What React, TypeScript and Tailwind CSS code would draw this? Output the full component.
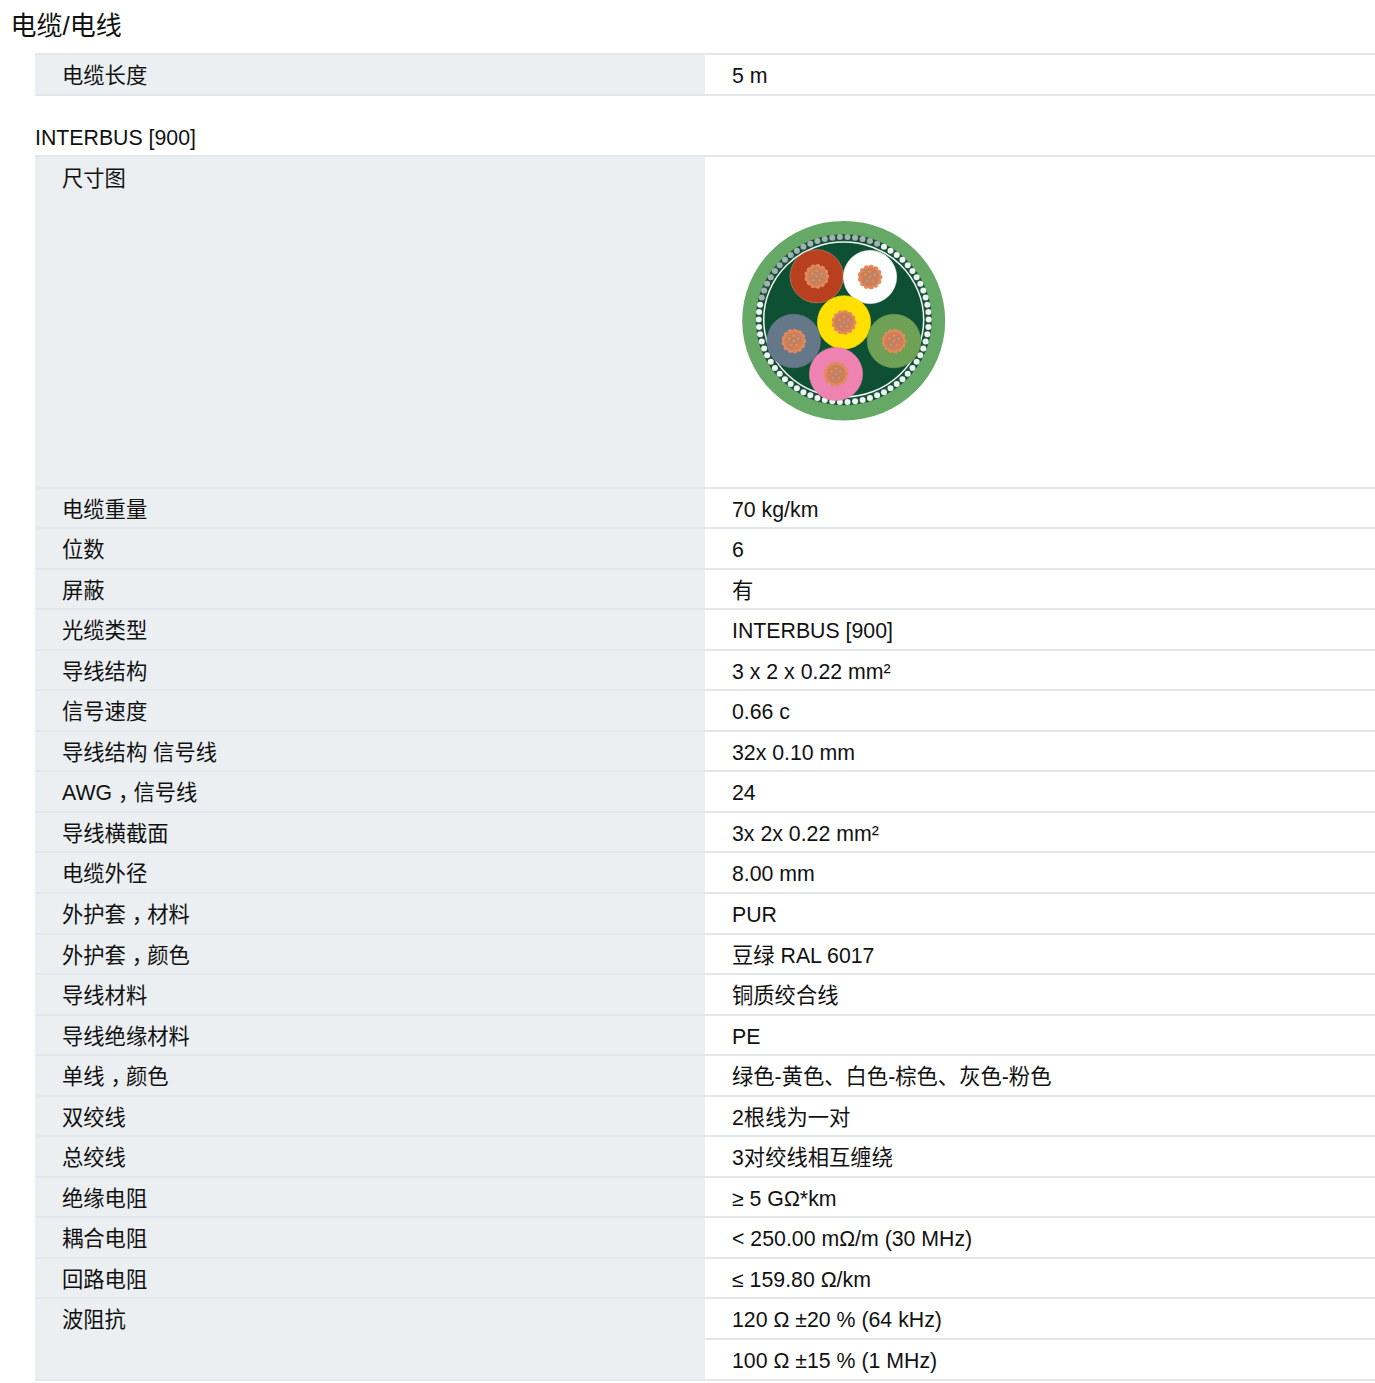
import React from 'react';

const rows: [string, string[]][] = [
  ['电缆重量', ['70 kg/km']],
  ['位数', ['6']],
  ['屏蔽', ['有']],
  ['光缆类型', ['INTERBUS [900]']],
  ['导线结构', ['3 x 2 x 0.22 mm²']],
  ['信号速度', ['0.66 c']],
  ['导线结构 信号线', ['32x 0.10 mm']],
  ['AWG，信号线', ['24']],
  ['导线横截面', ['3x 2x 0.22 mm²']],
  ['电缆外径', ['8.00 mm']],
  ['外护套，材料', ['PUR']],
  ['外护套，颜色', ['豆绿 RAL 6017']],
  ['导线材料', ['铜质绞合线']],
  ['导线绝缘材料', ['PE']],
  ['单线，颜色', ['绿色-黄色、白色-棕色、灰色-粉色']],
  ['双绞线', ['2根线为一对']],
  ['总绞线', ['3对绞线相互缠绕']],
  ['绝缘电阻', ['≥ 5 GΩ*km']],
  ['耦合电阻', ['< 250.00 mΩ/m (30 MHz)']],
  ['回路电阻', ['≤ 159.80 Ω/km']],
  ['波阻抗', ['120 Ω ±20 % (64 kHz)', '100 Ω ±15 % (1 MHz)']],
];

const cores = [
  { x: 91.7, y: 71.3, r: 26.6, fill: '#b8401f', stroke: '#c98a6c' },
  { x: 145, y: 72, r: 26.6, fill: '#ffffff', stroke: '#ffffff' },
  { x: 119, y: 117.3, r: 26.6, fill: '#ffe000', stroke: '#ffe000' },
  { x: 68.7, y: 136, r: 26.8, fill: '#64788a', stroke: '#64788a' },
  { x: 169, y: 136, r: 26.8, fill: '#6ea055', stroke: '#6ea055' },
  { x: 111, y: 169, r: 26.6, fill: '#ee82b0', stroke: '#ee82b0' },
];

function CableSection() {
  const beads = Array.from({ length: 70 }, (_, i) => {
    const a = (i / 70) * Math.PI * 2;
    return {
      x: 118.7 + 85 * Math.cos(a),
      y: 114.5 + 82.5 * Math.sin(a),
      up: Math.sin(a) < -0.2 && Math.cos(a) < 0.45,
    };
  });
  const outer = Array.from({ length: 13 }, (_, i) => {
    const a = (i / 13) * Math.PI * 2;
    return [9.8 * Math.cos(a), 9.8 * Math.sin(a)];
  });
  const inner = [[0, 0], [-4.6, -2.5], [4.6, -2.5], [0, -5.4], [-3, 4], [3, 4]];
  return (
    <svg width="240" height="235" viewBox="0 0 240 235" className="blur-[0.35px]">
      <ellipse cx="118.7" cy="115.7" rx="101.5" ry="99.8" fill="#66a866" />
      <ellipse cx="118.7" cy="114.7" rx="88" ry="85.5" fill="#16503a" />
      {beads.map((b, i) => (
        <circle key={i} cx={b.x} cy={b.y} r="3" fill={b.up ? '#a3b2ae' : '#eef3ef'} />
      ))}
      <ellipse cx="118.7" cy="114.5" rx="80" ry="77.5" fill="#0e5034" stroke="#f2f5f2" strokeWidth="1.5" />
      {cores.map((c, i) => (
        <g key={i}>
          <circle cx={c.x} cy={c.y} r={c.r} fill={c.fill} stroke={c.stroke} strokeWidth="0.6" />
          {outer.map(([dx, dy], j) => (
            <circle key={j} cx={c.x + dx} cy={c.y + dy} r="2.6" fill="#e08a5e" />
          ))}
          <circle cx={c.x} cy={c.y} r="9.5" fill="#cf8058" />
          {inner.map(([dx, dy], j) => (
            <circle key={j} cx={c.x + dx} cy={c.y + dy} r="2.1" fill={j % 2 === 0 ? '#bd9484' : '#dd8c62'} stroke="#b06c46" strokeWidth="0.4" />
          ))}
        </g>
      ))}
    </svg>
  );
}

// the source page sets the full-width comma in the middle of its cell
function Label({ text }: { text: string }) {
  const parts = text.split('，');
  if (parts.length === 1) return <>{text}</>;
  return (
    <>
      {parts[0]}
      <span className="inline-block w-[1em] pl-[0.28em] tracking-[-0.28em]">，</span>
      {parts[1]}
    </>
  );
}

function Row({ label, values }: { label: string; values: string[] }) {
  return (
    <div className="flex border-b-2 border-[#e3e6ea]">
      <div className="w-[669.5px] shrink-0 bg-[#eceff2] pl-[27px] pt-[7px] leading-[28px]">
        <Label text={label} />
      </div>
      <div className="flex-1">
        {values.map((v, i) => (
          <div
            key={v}
            className={
              i < values.length - 1
                ? 'h-[40.55px] border-b-2 border-[#e3e6ea] pl-[27.5px] pt-[7px] leading-[28px]'
                : 'h-[38.55px] pl-[27.5px] pt-[7px] leading-[28px]'
            }
          >
            {v}
          </div>
        ))}
      </div>
    </div>
  );
}

export default function App() {
  return (
    <div className="bg-white text-[#111111] text-[21.3px] font-['Liberation_Sans','Noto_Sans_CJK_SC',sans-serif] h-[1383px] overflow-hidden">
      <h2 className="h-[53px] pl-[10.5px] pt-[8px] text-[26px] leading-[36px] font-normal">电缆/电线</h2>
      <div className="pl-[35px]">
        <div className="border-t-2 border-[#e3e6ea]">
          <Row label="电缆长度" values={['5 m']} />
        </div>
        <div className="h-[59px] pt-[27px] leading-[30px]">INTERBUS [900]</div>
        <div className="border-t-2 border-[#e3e6ea]">
          <div className="flex h-[332px] border-b-2 border-[#e3e6ea]">
            <div className="w-[669.5px] shrink-0 bg-[#eceff2] pl-[27px] pt-[8px] leading-[28px]">尺寸图</div>
            <div className="flex-1 pl-[20px] pt-[48px]">
              <CableSection />
            </div>
          </div>
          {rows.map(([label, values]) => (
            <Row key={label} label={label} values={values} />
          ))}
        </div>
      </div>
    </div>
  );
}
